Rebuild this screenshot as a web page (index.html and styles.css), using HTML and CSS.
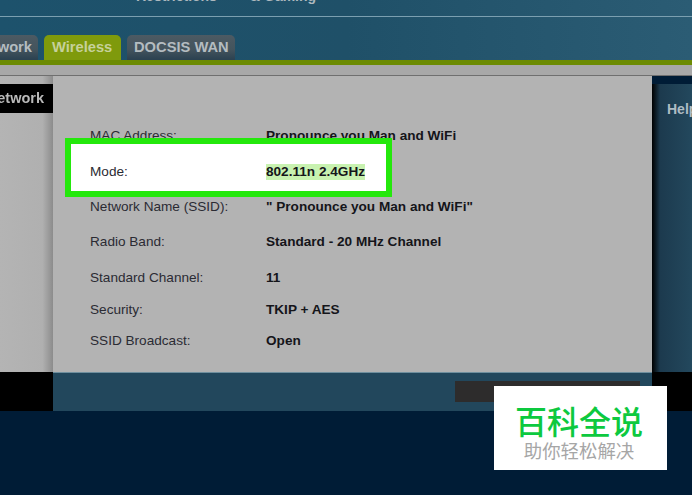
FILE: index.html
```html
<!DOCTYPE html>
<html lang="en">
<head>
<meta charset="utf-8">
<title>Router wireless settings</title>
<link rel="stylesheet" href="styles.css">
</head>
<body>
<div class="page">
  <div class="scene">
    <header class="header">
      <nav class="topnav">
        <span class="topnav-a">Restrictions</span>
        <span class="topnav-b">&amp; Gaming</span>
      </nav>
      <div class="rule"></div>
      <div class="tabs">
        <span class="tab tab-first">Network</span>
        <span class="tab tab-active">Wireless</span>
        <span class="tab tab-last">DOCSIS WAN</span>
      </div>
    </header>
    <div class="band"></div>
    <div class="subband"></div>
    <main class="main">
      <aside class="side">
        <div class="side-title">Network</div>
      </aside>
      <section class="card">
        <div class="row"><span class="label">MAC Address:</span><span class="value">Pronounce you Man and WiFi</span></div>
        <div class="row row-mode"><span class="label">Mode:</span><span class="value value-mark">802.11n 2.4GHz</span></div>
        <div class="row"><span class="label">Network Name (SSID):</span><span class="value">" Pronounce you Man and WiFi"</span></div>
        <div class="row"><span class="label">Radio Band:</span><span class="value">Standard - 20 MHz Channel</span></div>
        <div class="row"><span class="label">Standard Channel:</span><span class="value">11</span></div>
        <div class="row"><span class="label">Security:</span><span class="value">TKIP + AES</span></div>
        <div class="row"><span class="label">SSID Broadcast:</span><span class="value">Open</span></div>
      </section>
      <aside class="help">
        <div class="help-title">Help</div>
      </aside>
    </main>
    <footer class="footer">
      <div class="foot-left"></div>
      <div class="foot-mid"><div class="foot-button"></div></div>
      <div class="foot-right"></div>
    </footer>
  </div>
  <div class="badge">
    <div class="badge-title">百科全说</div>
    <div class="badge-sub">助你轻松解决</div>
  </div>
</div>
</body>
</html>
```
FILE: styles.css
```css
*, *::before { box-sizing: border-box; }
html, body { margin: 0; padding: 0; }
body { background: #001c36; font-family: "Liberation Sans", Arial, sans-serif; }
.page { position: relative; width: 692px; height: 495px; overflow: hidden; background: #001c36; }
.scene { filter: blur(0.5px); }

.header { height: 60px; background: linear-gradient(90deg, #1d526c 0%, #1f5068 50%, #2b5c74 100%); overflow: hidden; }
.topnav { display: flex; height: 4px; align-items: flex-end; color: #aeb9bf; font-size: 14px; font-weight: bold; line-height: 16px; white-space: nowrap; padding-left: 136px; overflow: hidden; }
.topnav-a { width: 114px; flex: none; }
.topnav-b { flex: none; }
.rule { height: 1px; margin-top: 12px; background: #7b9fb0; }
.tabs { display: flex; gap: 6px; margin-top: 18px; margin-left: -33px; }
.tab { height: 26px; padding: 4px 6px 0 7px; border-radius: 5px 5px 0 0; background: linear-gradient(180deg, #4c5a63 0%, #44545d 55%, #283f4f 100%); color: #b4bcc0; font-size: 14.7px; font-weight: bold; line-height: 17px; white-space: nowrap; }
.tab-first { width: 71px; padding-left: 0; padding-right: 6px; text-align: right; }
.tab-active { width: 77px; padding-left: 8px; background: #7f9a0c; color: #c6d19a; }
.tab-last { width: 108px; }

.band { height: 5px; background: #6c8b03; }
.subband { height: 11px; background: #a8a8a8; border-bottom: 1px solid #6f6f6f; }

.main { display: flex; height: 296px; }
.side { width: 53px; flex: none; padding-top: 8px; background: linear-gradient(90deg, #b4b4b4 0%, #b0b0b0 80%, #8c8c8c 100%); }
.side-title { height: 29px; padding-right: 9px; background: #000; color: #b9b9b9; font-size: 14.5px; font-weight: bold; line-height: 29px; text-align: right; white-space: nowrap; overflow: hidden; direction: rtl; }
.card { flex: 1; display: grid; grid-template-rows: 36px 35px 35px 36px 32px 31px 31px; align-content: start; padding: 52px 0 0 37px; background: #b3b3b3; }
.row { position: relative; display: flex; font-size: 13.6px; line-height: 16px; color: #2b2b33; }
.label { width: 176px; flex: none; }
.value { font-weight: bold; color: #15151a; }
.row-mode { z-index: 1; }
.row-mode::before { content: ""; position: absolute; left: -25px; top: -26px; width: 327px; height: 59px; border: 6px solid #24e80c; background: #fff; z-index: -1; }
.value-mark { height: 16px; background: #c8f2b0; }

.help { width: 40px; flex: none; margin-top: 8px; padding: 16px 0 0 15px; background: linear-gradient(90deg, #000 0%, #1c3a4e 20%, #23485d 100%); color: #aebcc4; font-size: 14px; font-weight: bold; line-height: 18px; overflow: hidden; }

.footer { display: flex; height: 39px; }
.foot-left { width: 53px; background: #000; flex: none; }
.foot-mid { flex: 1; display: flex; justify-content: flex-end; padding: 8px 12px 9px 0; background: #22475c; border-top: 1px solid #6f8f9e; }
.foot-button { width: 185px; background: #2d2c2c; }
.foot-right { width: 40px; background: #000; flex: none; }

.badge { position: absolute; left: 494px; top: 386px; width: 173px; height: 84px; padding-right: 3px; background: #fff; text-align: center; font-family: "Noto Sans CJK SC", sans-serif; }
.badge-title { margin-top: 16px; color: #0dc93f; font-size: 32px; font-weight: 500; line-height: 36px; }
.badge-sub { margin-top: 2px; color: #a6a6a6; font-size: 18.4px; line-height: 20px; }
```
